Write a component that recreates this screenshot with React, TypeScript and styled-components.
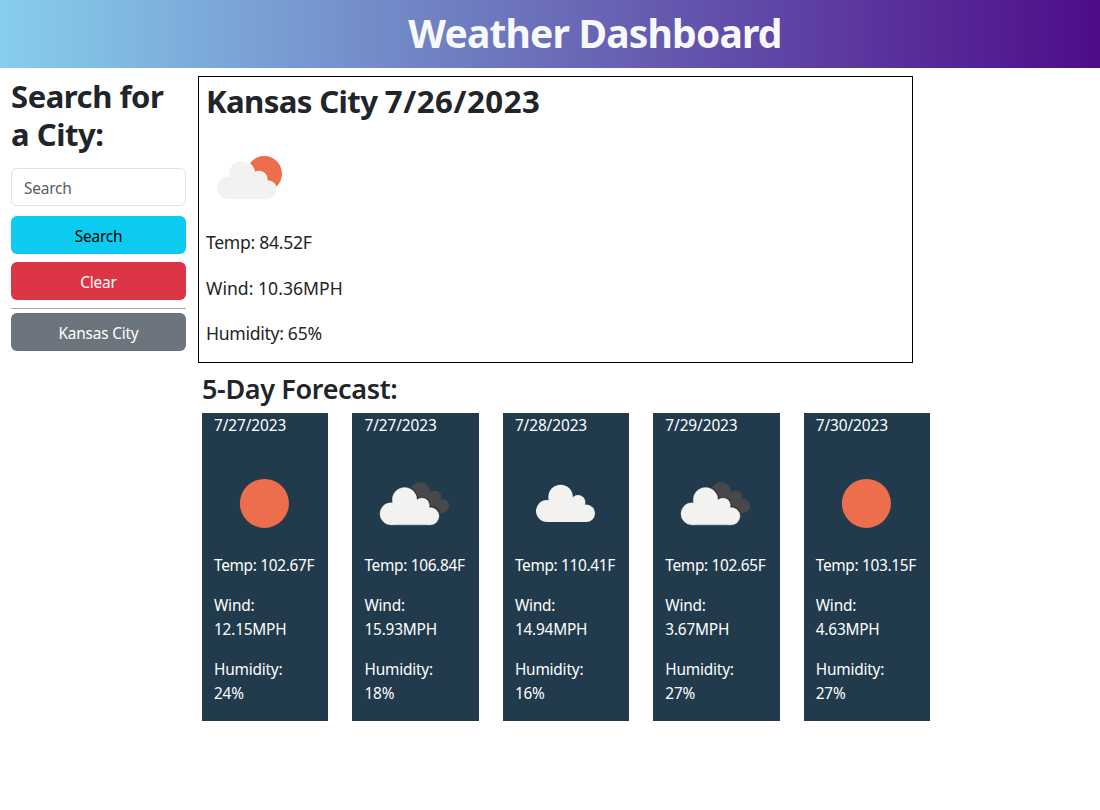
import React, { useId } from "react";
import styled, { createGlobalStyle } from "styled-components";

const GlobalStyle = createGlobalStyle`
  *, *::before, *::after { box-sizing: border-box; }
  body {
    margin: 0;
    background: #fff;
    color: #212529;
    font-family: "Segoe UI", "Noto Sans", sans-serif;
    font-size: 15.4px;
    line-height: 24px;
    letter-spacing: -0.2px;
  }
  h1, h2, h3, p { margin: 0; }
`;

const Header = styled.header`
  display: flex;
  justify-content: center;
  height: 68px;
  padding: 9px 0 0 90px;
  background: linear-gradient(to right, #87ceeb, #4e0c88);
`;

const Title = styled.h1`
  color: #f8f9fa;
  font-size: 39px;
  font-weight: 700;
  line-height: 48px;
  letter-spacing: -0.82px;
  white-space: nowrap;
`;

const Main = styled.main`
  display: flex;
  align-items: flex-start;
  gap: 12px;
  padding: 8px 0 0 11px;
`;

const Sidebar = styled.aside`
  display: flex;
  flex-direction: column;
  width: 175px;
  padding-top: 1px;
`;

const SidebarTitle = styled.h2`
  margin-bottom: 14px;
  font-size: 31px;
  font-weight: 700;
  line-height: 38.4px;
  letter-spacing: -0.45px;
  white-space: nowrap;
`;

const TitleLine = styled.span`
  display: block;
`;

const SearchInput = styled.input`
  width: 100%;
  height: 38px;
  margin-bottom: 10px;
  padding: 9px 12px 5px;
  border: 1px solid #dee2e6;
  border-radius: 6px;
  background: #fff;
  font: inherit;
  letter-spacing: inherit;
  &::placeholder { color: #595c5f; opacity: 1; }
`;

const Button = styled.button<{ $bg: string; $color?: string }>`
  height: 38px;
  padding: 4px 0 0;
  border: 0;
  border-radius: 6px;
  background: ${(p) => p.$bg};
  color: ${(p) => p.$color ?? "#fff"};
  font: inherit;
  letter-spacing: inherit;
  & + & { margin-top: 8px; }
`;

const Divider = styled.hr`
  width: 100%;
  height: 1px;
  margin: 8px 0 4px;
  border: 0;
  background: #acadae;
`;

const Content = styled.div`
  display: flex;
  flex-direction: column;
`;

const Current = styled.section`
  width: 715px;
  height: 287px;
  padding: 5px 7px;
  border: 1px solid #000;
`;

const CurrentTitle = styled.h2`
  margin-bottom: 6.6px;
  font-size: 31.2px;
  font-weight: 700;
  line-height: 38.4px;
  letter-spacing: -0.65px;
`;

const CurrentDate = styled.span`
  letter-spacing: 0.55px;
`;

const Reading = styled.p<{ $track?: number }>`
  margin-bottom: 18.5px;
  font-size: 17.6px;
  line-height: 27px;
  letter-spacing: ${(p) => p.$track ?? -0.3}px;
`;

const ForecastTitle = styled.h3`
  margin: 9px 0 7px 4px;
  font-size: 27px;
  font-weight: 600;
  line-height: 34px;
  letter-spacing: -0.35px;
`;

const Days = styled.div`
  display: flex;
  gap: 24px;
  margin-left: 4px;
`;

const DayCard = styled.article`
  display: flex;
  flex-direction: column;
  gap: 16px;
  width: 126.45px;
  height: 308px;
  padding: 1px 12px 0;
  background: #213b4d;
  color: #fff;
`;

const Line = styled.p<{ $track?: number }>`
  white-space: nowrap;
  letter-spacing: ${(p) => p.$track ?? -0.2}px;
`;

const IconSvg = styled.svg`
  display: block;
  flex: none;
  width: 100px;
  height: 100px;
`;

const CurrentIcon = styled.div`
  height: 102px;
`;

const ImageSlot = styled.div`
  height: 100px;
  margin: -1px 0 -15px;
`;

type IconKind = "sun" | "cloud" | "broken" | "partly";

const Cloud = ({ dx = 0, dy = 0, fill = "#f2f2f0", edge = 0 }) => (
  <g transform={`translate(${dx} ${dy})`} fill={fill} stroke={fill} strokeWidth={edge * 2}>
    <circle cx="32" cy="58" r="11" />
    <circle cx="45.6" cy="44" r="12.3" />
    <circle cx="63" cy="49.5" r="7.4" />
    <circle cx="71.3" cy="60.3" r="8.7" />
    <path d="M32 69V54L45 44L63 50L71.3 60V69Z" />
  </g>
);

const DarkCloud = () => (
  <g fill="#48484a">
    <circle cx="56" cy="39" r="10" />
    <circle cx="71" cy="43.7" r="6.2" />
    <circle cx="77.8" cy="53" r="7.2" />
    <path d="M56 38L71 39L78 60.2H56Z" />
  </g>
);

const DarkCloudClip = ({ id }: { id: string }) => (
  <clipPath id={id}>
    <circle cx="56" cy="39" r="10" />
    <circle cx="71" cy="43.7" r="6.2" />
    <circle cx="77.8" cy="53" r="7.2" />
    <path d="M56 38L71 39L78 60.2H56Z" />
  </clipPath>
);

const WeatherIcon = ({ kind }: { kind: IconKind }) => {
  const clip = useId();
  return (
    <IconSvg viewBox="0 0 100 100" aria-hidden="true">
      {kind === "sun" && <circle cx="50.4" cy="50.4" r="24.5" fill="#ec6e4c" />}
      {kind === "cloud" && <Cloud />}
      {kind === "broken" && (
        <>
          <DarkCloudClip id={clip} />
          <DarkCloud />
          <g clipPath={`url(#${clip})`}>
            <Cloud dx={-5} dy={2.8} fill="#22232b" edge={1.2} />
          </g>
          <Cloud dx={-5} dy={2.8} edge={0.2} />
        </>
      )}
      {kind === "partly" && (
        <>
          <clipPath id={clip}><circle cx="58.3" cy="46.7" r="17.8" /></clipPath>
          <circle cx="58.3" cy="46.7" r="17.7" fill="#ec6e4c" />
          <g clipPath={`url(#${clip})`}>
            <Cloud dx={-10} dy={2.8} fill="#fff" edge={1.2} />
          </g>
          <Cloud dx={-10} dy={2.8} edge={0.2} />
        </>
      )}
    </IconSvg>
  );
};

interface Day {
  date: string;
  icon: IconKind;
  temp: string;
  wind: string;
  humidity: string;
}

const days: Day[] = [
  { date: "7/27/2023", icon: "sun", temp: "102.67F", wind: "12.15MPH", humidity: "24%" },
  { date: "7/27/2023", icon: "broken", temp: "106.84F", wind: "15.93MPH", humidity: "18%" },
  { date: "7/28/2023", icon: "cloud", temp: "110.41F", wind: "14.94MPH", humidity: "16%" },
  { date: "7/29/2023", icon: "broken", temp: "102.65F", wind: "3.67MPH", humidity: "27%" },
  { date: "7/30/2023", icon: "sun", temp: "103.15F", wind: "4.63MPH", humidity: "27%" },
];

export default function App() {
  return (
    <>
      <GlobalStyle />
      <Header>
        <Title>Weather Dashboard</Title>
      </Header>
      <Main>
        <Sidebar>
          <SidebarTitle>
            <TitleLine>Search for</TitleLine>
            <TitleLine>a City:</TitleLine>
          </SidebarTitle>
          <SearchInput placeholder="Search" />
          <Button $bg="#0dcaf0" $color="#000">Search</Button>
          <Button $bg="#dc3545">Clear</Button>
          <Divider />
          <Button $bg="#6c757d">Kansas City</Button>
        </Sidebar>
        <Content>
          <Current>
            <CurrentTitle>Kansas City <CurrentDate>7/26/2023</CurrentDate></CurrentTitle>
            <CurrentIcon><WeatherIcon kind="partly" /></CurrentIcon>
            <Reading>Temp: 84.52F</Reading>
            <Reading $track={0.02}>Wind: 10.36MPH</Reading>
            <Reading>Humidity: 65%</Reading>
          </Current>
          <ForecastTitle>5-Day Forecast:</ForecastTitle>
          <Days>
            {days.map((day, i) => (
              <DayCard key={i}>
                <Line $track={-0.1}>{day.date}</Line>
                <ImageSlot><WeatherIcon kind={day.icon} /></ImageSlot>
                <Line $track={-0.32}>Temp: {day.temp}</Line>
                <Line>Wind: <br />{day.wind}</Line>
                <Line>Humidity: <br />{day.humidity}</Line>
              </DayCard>
            ))}
          </Days>
        </Content>
      </Main>
    </>
  );
}
